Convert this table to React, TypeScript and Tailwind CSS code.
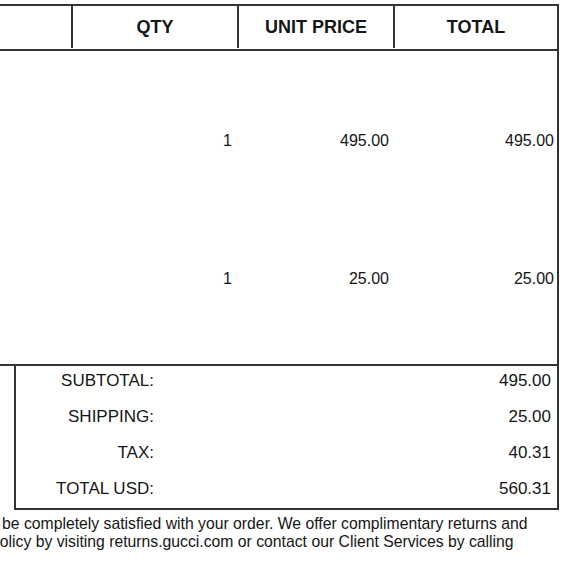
import React from "react";

const line = "border-[#333333]";

export default function App() {
  return (
    <div className="w-[580px] h-[580px] bg-white overflow-hidden font-['Liberation_Sans',Arial,Helvetica,sans-serif] text-[#161616]">
      <div className="pt-[4px] w-[559px]">
        {/* table frame */}
        <div className={`border-t-2 border-r-2 ${line}`}>
          {/* header */}
          <div className={`grid grid-cols-[71px_166px_156px_1fr] h-[45px] border-b-2 ${line} font-bold text-[18px] pb-[1px]`}>
            <div />
            <div className={`border-l-2 ${line} flex items-center justify-center`}>QTY</div>
            <div className={`border-l-2 ${line} flex items-center justify-center`}>UNIT PRICE</div>
            <div className={`border-l-2 ${line} flex items-center justify-center`}>TOTAL</div>
          </div>
          {/* body */}
          <div className={`h-[315px] border-b-2 ${line} pt-[21px] text-[16px]`}>
            {[
              { qty: "1", price: "495.00", total: "495.00" },
              { qty: "1", price: "25.00", total: "25.00" },
            ].map((r, i) => (
              <div key={i} className="grid grid-cols-[71px_166px_156px_1fr] h-[138px] items-center">
                <div />
                <div className="text-right pr-[5px] pl-[2px]">{r.qty}</div>
                <div className="text-right pr-[4px] pl-[2px]">{r.price}</div>
                <div className="text-right pr-[3px] pl-[2px]">{r.total}</div>
              </div>
            ))}
          </div>
        </div>
        {/* summary */}
        <div className={`ml-[14px] border-l-2 border-r-2 border-b-2 ${line} text-[17px] h-[144px] overflow-hidden`}>
          <div className="-mt-[3px]">
            {[
              ["SUBTOTAL:", "495.00"],
              ["SHIPPING:", "25.00"],
              ["TAX:", "40.31"],
              ["TOTAL USD:", "560.31"],
            ].map(([label, value]) => (
              <div key={label} className="grid grid-cols-[138px_1fr] h-[36px] items-center">
                <div className="text-right">{label}</div>
                <div className="text-right pr-[6px]">{value}</div>
              </div>
            ))}
          </div>
        </div>
      </div>
      {/* footer note */}
      <div className="mt-[5px] text-[15.75px] leading-[18px] whitespace-nowrap">
        <div className="ml-[2px]">be completely satisfied with your order. We offer complimentary returns and</div>
        <div className="ml-[-9px]">policy by visiting returns.gucci.com or contact our Client Services by calling</div>
      </div>
    </div>
  );
}
